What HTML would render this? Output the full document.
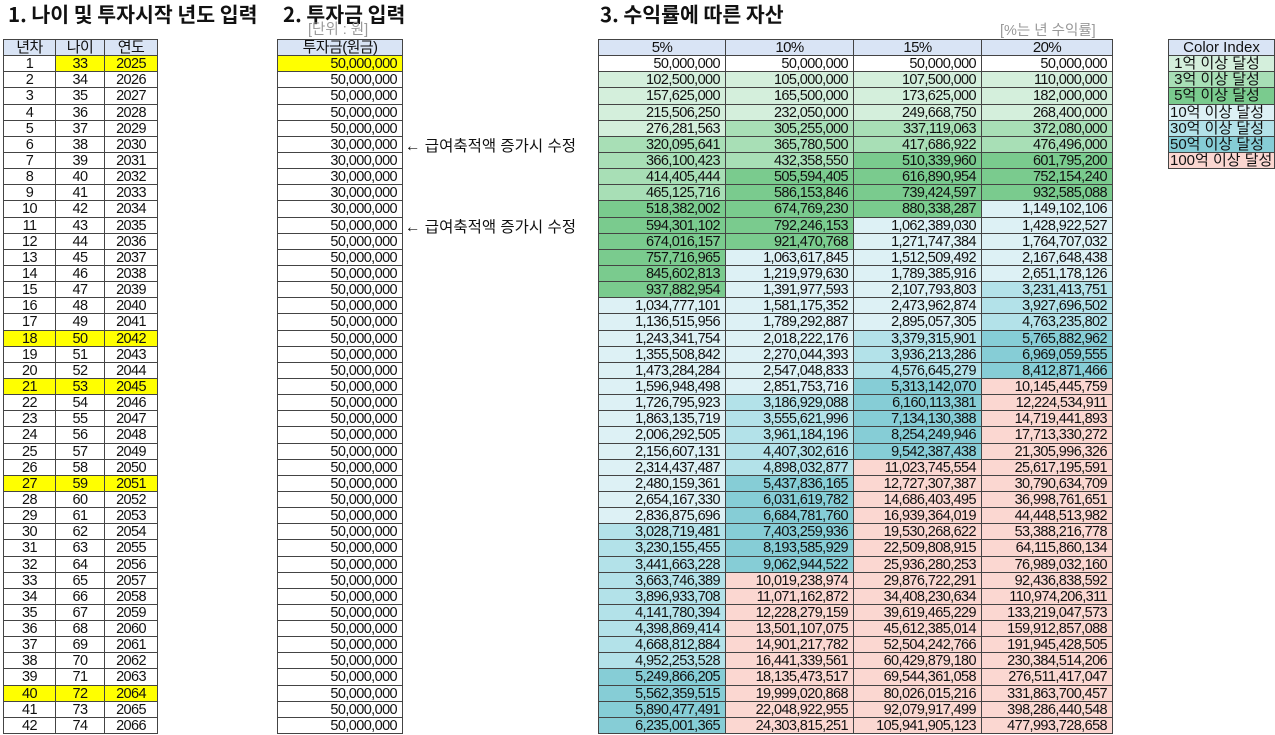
<!DOCTYPE html>
<html><head><meta charset="utf-8"><style>
body{margin:0;width:1275px;height:735px;background:#fff;position:relative;overflow:hidden;font-family:"Liberation Sans","Noto Sans CJK KR",sans-serif;color:#111}
.t{position:absolute;font-weight:bold;font-size:20.5px;top:-2px;white-space:nowrap;font-family:"Noto Sans CJK KR","Liberation Sans",sans-serif}
.n{position:absolute;font-size:14.5px;color:#999;white-space:nowrap;line-height:16px;font-family:"Liberation Sans","Noto Sans CJK KR",sans-serif}
.g{position:absolute;top:39px;display:grid;grid-auto-rows:16.15px;border-left:1px solid #444;border-top:1px solid #444}
.g>i{font-style:normal;border-right:1px solid #444;border-bottom:1px solid #444;font-size:14.5px;letter-spacing:-0.6px;line-height:16px;white-space:nowrap;overflow:hidden;text-align:right;padding-right:5px;background:#fff}
.c>i{text-align:center;padding:0}
.g>i.h{background:#d9e4f5;text-align:center;padding:0;font-size:15px}
.y{background:#ffff00!important}
.g1{background:#d4efdc!important}.g2{background:#a8dfb6!important}.g3{background:#7acb8e!important}
.b1{background:#ddf1f5!important}.b2{background:#b3e2e9!important}.b3{background:#86cdd6!important}.p{background:#fbd7d1!important}
.ar{position:absolute;left:405px;font-size:15.5px;white-space:nowrap;font-family:"Liberation Sans","Noto Sans CJK KR",sans-serif}
.ci>i{text-align:left;padding-left:1px;padding-right:0;font-size:15px;letter-spacing:0}
</style></head><body>
<div class="t" style="left:8px">1. 나이 및 투자시작 년도 입력</div>
<div class="t" style="left:283px">2. 투자금 입력</div>
<div class="t" style="left:600px">3. 수익률에 따른 자산</div>
<div class="n" style="left:308px;top:22px">[단위 : 원]</div>
<div class="n" style="left:1000px;top:23px">[%는 년 수익률]</div>
<div class="ar" style="top:134px">← 급여축적액 증가시 수정</div>
<div class="ar" style="top:215px">← 급여축적액 증가시 수정</div>

<div class="g c" style="left:3px;grid-template-columns:52px 49px 53px">
<i class=h>년차</i><i class=h>나이</i><i class=h>연도</i>
<i>1</i><i class=y>33</i><i class=y>2025</i>
<i>2</i><i>34</i><i>2026</i>
<i>3</i><i>35</i><i>2027</i>
<i>4</i><i>36</i><i>2028</i>
<i>5</i><i>37</i><i>2029</i>
<i>6</i><i>38</i><i>2030</i>
<i>7</i><i>39</i><i>2031</i>
<i>8</i><i>40</i><i>2032</i>
<i>9</i><i>41</i><i>2033</i>
<i>10</i><i>42</i><i>2034</i>
<i>11</i><i>43</i><i>2035</i>
<i>12</i><i>44</i><i>2036</i>
<i>13</i><i>45</i><i>2037</i>
<i>14</i><i>46</i><i>2038</i>
<i>15</i><i>47</i><i>2039</i>
<i>16</i><i>48</i><i>2040</i>
<i>17</i><i>49</i><i>2041</i>
<i class=y>18</i><i class=y>50</i><i class=y>2042</i>
<i>19</i><i>51</i><i>2043</i>
<i>20</i><i>52</i><i>2044</i>
<i class=y>21</i><i class=y>53</i><i class=y>2045</i>
<i>22</i><i>54</i><i>2046</i>
<i>23</i><i>55</i><i>2047</i>
<i>24</i><i>56</i><i>2048</i>
<i>25</i><i>57</i><i>2049</i>
<i>26</i><i>58</i><i>2050</i>
<i class=y>27</i><i class=y>59</i><i class=y>2051</i>
<i>28</i><i>60</i><i>2052</i>
<i>29</i><i>61</i><i>2053</i>
<i>30</i><i>62</i><i>2054</i>
<i>31</i><i>63</i><i>2055</i>
<i>32</i><i>64</i><i>2056</i>
<i>33</i><i>65</i><i>2057</i>
<i>34</i><i>66</i><i>2058</i>
<i>35</i><i>67</i><i>2059</i>
<i>36</i><i>68</i><i>2060</i>
<i>37</i><i>69</i><i>2061</i>
<i>38</i><i>70</i><i>2062</i>
<i>39</i><i>71</i><i>2063</i>
<i class=y>40</i><i class=y>72</i><i class=y>2064</i>
<i>41</i><i>73</i><i>2065</i>
<i>42</i><i>74</i><i>2066</i>
</div>

<div class="g" style="left:277px;grid-template-columns:125px">
<i class=h>투자금(원금)</i>
<i class=y>50,000,000</i><i>50,000,000</i><i>50,000,000</i><i>50,000,000</i><i>50,000,000</i>
<i>30,000,000</i><i>30,000,000</i><i>30,000,000</i><i>30,000,000</i><i>30,000,000</i>
<i>50,000,000</i><i>50,000,000</i><i>50,000,000</i><i>50,000,000</i><i>50,000,000</i><i>50,000,000</i><i>50,000,000</i><i>50,000,000</i><i>50,000,000</i><i>50,000,000</i>
<i>50,000,000</i><i>50,000,000</i><i>50,000,000</i><i>50,000,000</i><i>50,000,000</i><i>50,000,000</i><i>50,000,000</i><i>50,000,000</i><i>50,000,000</i><i>50,000,000</i>
<i>50,000,000</i><i>50,000,000</i><i>50,000,000</i><i>50,000,000</i><i>50,000,000</i><i>50,000,000</i><i>50,000,000</i><i>50,000,000</i><i>50,000,000</i><i>50,000,000</i>
<i>50,000,000</i><i>50,000,000</i>
</div>

<div class="g" style="left:598px;grid-template-columns:127px 128px 128px 131px">
<i class=h>5%</i><i class=h>10%</i><i class=h>15%</i><i class=h>20%</i>
<i>50,000,000</i><i>50,000,000</i><i>50,000,000</i><i>50,000,000</i>
<i class=g1>102,500,000</i><i class=g1>105,000,000</i><i class=g1>107,500,000</i><i class=g1>110,000,000</i>
<i class=g1>157,625,000</i><i class=g1>165,500,000</i><i class=g1>173,625,000</i><i class=g1>182,000,000</i>
<i class=g1>215,506,250</i><i class=g1>232,050,000</i><i class=g1>249,668,750</i><i class=g1>268,400,000</i>
<i class=g1>276,281,563</i><i class=g2>305,255,000</i><i class=g2>337,119,063</i><i class=g2>372,080,000</i>
<i class=g2>320,095,641</i><i class=g2>365,780,500</i><i class=g2>417,686,922</i><i class=g2>476,496,000</i>
<i class=g2>366,100,423</i><i class=g2>432,358,550</i><i class=g3>510,339,960</i><i class=g3>601,795,200</i>
<i class=g2>414,405,444</i><i class=g3>505,594,405</i><i class=g3>616,890,954</i><i class=g3>752,154,240</i>
<i class=g2>465,125,716</i><i class=g3>586,153,846</i><i class=g3>739,424,597</i><i class=g3>932,585,088</i>
<i class=g3>518,382,002</i><i class=g3>674,769,230</i><i class=g3>880,338,287</i><i class=b1>1,149,102,106</i>
<i class=g3>594,301,102</i><i class=g3>792,246,153</i><i class=b1>1,062,389,030</i><i class=b1>1,428,922,527</i>
<i class=g3>674,016,157</i><i class=g3>921,470,768</i><i class=b1>1,271,747,384</i><i class=b1>1,764,707,032</i>
<i class=g3>757,716,965</i><i class=b1>1,063,617,845</i><i class=b1>1,512,509,492</i><i class=b1>2,167,648,438</i>
<i class=g3>845,602,813</i><i class=b1>1,219,979,630</i><i class=b1>1,789,385,916</i><i class=b1>2,651,178,126</i>
<i class=g3>937,882,954</i><i class=b1>1,391,977,593</i><i class=b1>2,107,793,803</i><i class=b2>3,231,413,751</i>
<i class=b1>1,034,777,101</i><i class=b1>1,581,175,352</i><i class=b1>2,473,962,874</i><i class=b2>3,927,696,502</i>
<i class=b1>1,136,515,956</i><i class=b1>1,789,292,887</i><i class=b1>2,895,057,305</i><i class=b2>4,763,235,802</i>
<i class=b1>1,243,341,754</i><i class=b1>2,018,222,176</i><i class=b2>3,379,315,901</i><i class=b3>5,765,882,962</i>
<i class=b1>1,355,508,842</i><i class=b1>2,270,044,393</i><i class=b2>3,936,213,286</i><i class=b3>6,969,059,555</i>
<i class=b1>1,473,284,284</i><i class=b1>2,547,048,833</i><i class=b2>4,576,645,279</i><i class=b3>8,412,871,466</i>
<i class=b1>1,596,948,498</i><i class=b1>2,851,753,716</i><i class=b3>5,313,142,070</i><i class=p>10,145,445,759</i>
<i class=b1>1,726,795,923</i><i class=b2>3,186,929,088</i><i class=b3>6,160,113,381</i><i class=p>12,224,534,911</i>
<i class=b1>1,863,135,719</i><i class=b2>3,555,621,996</i><i class=b3>7,134,130,388</i><i class=p>14,719,441,893</i>
<i class=b1>2,006,292,505</i><i class=b2>3,961,184,196</i><i class=b3>8,254,249,946</i><i class=p>17,713,330,272</i>
<i class=b1>2,156,607,131</i><i class=b2>4,407,302,616</i><i class=b3>9,542,387,438</i><i class=p>21,305,996,326</i>
<i class=b1>2,314,437,487</i><i class=b2>4,898,032,877</i><i class=p>11,023,745,554</i><i class=p>25,617,195,591</i>
<i class=b1>2,480,159,361</i><i class=b3>5,437,836,165</i><i class=p>12,727,307,387</i><i class=p>30,790,634,709</i>
<i class=b1>2,654,167,330</i><i class=b3>6,031,619,782</i><i class=p>14,686,403,495</i><i class=p>36,998,761,651</i>
<i class=b1>2,836,875,696</i><i class=b3>6,684,781,760</i><i class=p>16,939,364,019</i><i class=p>44,448,513,982</i>
<i class=b2>3,028,719,481</i><i class=b3>7,403,259,936</i><i class=p>19,530,268,622</i><i class=p>53,388,216,778</i>
<i class=b2>3,230,155,455</i><i class=b3>8,193,585,929</i><i class=p>22,509,808,915</i><i class=p>64,115,860,134</i>
<i class=b2>3,441,663,228</i><i class=b3>9,062,944,522</i><i class=p>25,936,280,253</i><i class=p>76,989,032,160</i>
<i class=b2>3,663,746,389</i><i class=p>10,019,238,974</i><i class=p>29,876,722,291</i><i class=p>92,436,838,592</i>
<i class=b2>3,896,933,708</i><i class=p>11,071,162,872</i><i class=p>34,408,230,634</i><i class=p>110,974,206,311</i>
<i class=b2>4,141,780,394</i><i class=p>12,228,279,159</i><i class=p>39,619,465,229</i><i class=p>133,219,047,573</i>
<i class=b2>4,398,869,414</i><i class=p>13,501,107,075</i><i class=p>45,612,385,014</i><i class=p>159,912,857,088</i>
<i class=b2>4,668,812,884</i><i class=p>14,901,217,782</i><i class=p>52,504,242,766</i><i class=p>191,945,428,505</i>
<i class=b2>4,952,253,528</i><i class=p>16,441,339,561</i><i class=p>60,429,879,180</i><i class=p>230,384,514,206</i>
<i class=b3>5,249,866,205</i><i class=p>18,135,473,517</i><i class=p>69,544,361,058</i><i class=p>276,511,417,047</i>
<i class=b3>5,562,359,515</i><i class=p>19,999,020,868</i><i class=p>80,026,015,216</i><i class=p>331,863,700,457</i>
<i class=b3>5,890,477,491</i><i class=p>22,048,922,955</i><i class=p>92,079,917,499</i><i class=p>398,286,440,548</i>
<i class=b3>6,235,001,365</i><i class=p>24,303,815,251</i><i class=p>105,941,905,123</i><i class=p>477,993,728,658</i>
</div>

<div class="g ci" style="left:1168px;grid-template-columns:106px">
<i class=h>Color Index</i>
<i class=g1>&nbsp;1억 이상 달성</i><i class=g2>&nbsp;3억 이상 달성</i><i class=g3>&nbsp;5억 이상 달성</i>
<i class=b1>10억 이상 달성</i><i class=b2>30억 이상 달성</i><i class=b3>50억 이상 달성</i><i class=p>100억 이상 달성</i>
</div>
</body></html>
